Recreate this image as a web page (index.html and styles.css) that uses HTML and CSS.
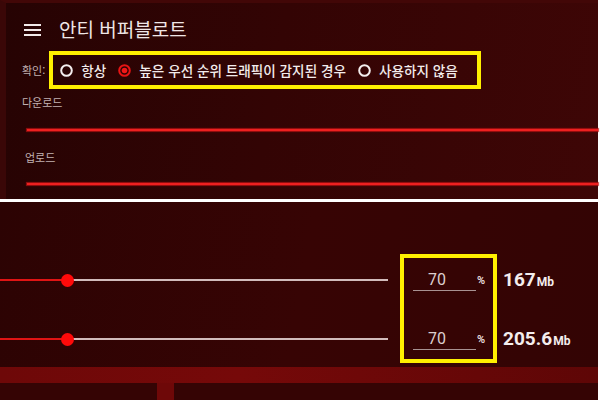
FILE: index.html
```html
<!DOCTYPE html>
<html lang="ko">
<head>
<meta charset="utf-8">
<link rel="stylesheet" href="styles.css">
</head>
<body>
<div class="page">
  <section class="panel top">
    <div class="title-row">
      <svg class="menu" width="17" height="12" viewBox="0 0 17 12">
        <rect x="0" y="0" width="17" height="2" fill="#f2eaea"/>
        <rect x="0" y="5" width="17" height="2" fill="#f2eaea"/>
        <rect x="0" y="10" width="17" height="2" fill="#f2eaea"/>
      </svg>
      <span class="title">안티 버퍼블로트</span>
    </div>
    <div class="check-row">
      <span class="label">확인:</span>
      <div class="hl radios">
        <span class="radio">
          <svg width="13" height="13" viewBox="0 0 13 13"><circle cx="6.5" cy="6.5" r="5.3" fill="none" stroke="#f4eeee" stroke-width="2"/></svg>
          <span>항상</span>
        </span>
        <span class="radio">
          <svg width="13" height="13" viewBox="0 0 13 13"><circle cx="6.5" cy="6.5" r="5.3" fill="none" stroke="#e61414" stroke-width="2"/><circle cx="6.5" cy="6.5" r="2.8" fill="#f01818"/></svg>
          <span>높은 우선 순위 트래픽이 감지된 경우</span>
        </span>
        <span class="radio">
          <svg width="13" height="13" viewBox="0 0 13 13"><circle cx="6.5" cy="6.5" r="5.3" fill="none" stroke="#f4eeee" stroke-width="2"/></svg>
          <span>사용하지 않음</span>
        </span>
      </div>
    </div>
    <div class="label sec-down">다운로드</div>
    <div class="redline first"></div>
    <div class="label sec-up">업로드</div>
    <div class="redline second"></div>
  </section>
  <section class="panel bottom">
    <div class="controls">
      <div class="sliders">
        <div class="row"><div class="track"><div class="fill"></div><div class="rest"></div><span class="thumb"></span></div></div>
        <div class="row"><div class="track"><div class="fill"></div><div class="rest"></div><span class="thumb"></span></div></div>
      </div>
      <div class="hl inputs">
        <div class="row"><span class="field">70</span><span class="pct">%</span></div>
        <div class="row"><span class="field">70</span><span class="pct">%</span></div>
      </div>
      <div class="values">
        <div class="row"><span class="num">167</span><span class="unit">Mb</span></div>
        <div class="row"><span class="num">205.6</span><span class="unit">Mb</span></div>
      </div>
    </div>
    <div class="band"></div>
    <div class="foot"><span class="stub"></span></div>
  </section>
</div>
</body>
</html>
```

FILE: styles.css
```css
html, body {
  margin: 0;
  padding: 0;
  background: #ffffff;
}
body {
  width: 600px;
  height: 400px;
  overflow: hidden;
  font-family: "Noto Sans CJK KR", "Noto Sans", Roboto, sans-serif;
}
.page {
  display: flex;
  flex-direction: column;
  gap: 3px;
  width: 598px;
}
.panel {
  box-sizing: border-box;
}
.top {
  height: 199px;
  border-top: 3px solid #420707;
  border-left: 6px solid #3a0707;
  padding-left: 16px;
  background: linear-gradient(100deg, #260303 0%, #330404 45%, #3e0606 100%);
  display: flex;
  flex-direction: column;
}
.title-row {
  height: 48px;
  box-sizing: border-box;
  padding-top: 4px;
  display: flex;
  align-items: center;
}
.menu {
  margin-left: 2px;
  margin-top: 2px;
}
.title {
  margin-left: 18px;
  font-size: 19px;
  color: #efe6e6;
  line-height: 24px;
}
.check-row {
  height: 38px;
  display: flex;
  align-items: center;
}
.label {
  font-size: 11px;
  line-height: 14px;
  color: #c2b2b2;
}
.hl {
  border: 4px solid #fff000;
  box-sizing: border-box;
}
.radios {
  margin-left: 4px;
  height: 38px;
  width: 432px;
  padding-left: 7px;
  display: flex;
  align-items: center;
  gap: 12px;
}
.radio {
  display: flex;
  align-items: center;
  gap: 8px;
  font-size: 13.6px;
  font-weight: 500;
  color: #f3ecec;
}
.radio svg {
  flex: none;
}
.sec-down {
  margin-top: 6px;
}
.redline {
  height: 2px;
  margin-left: 5px;
  background: #ee2020;
  box-shadow: 0 0 1px 1px rgba(190, 20, 20, 0.75);
}
.first {
  margin-top: 20px;
}
.sec-up {
  margin-top: 19px;
  margin-left: 3px;
}
.second {
  margin-top: 19px;
}
.bottom {
  height: 198px;
  background: linear-gradient(100deg, #2c0303 0%, #370404 50%, #330404 100%);
  display: flex;
  flex-direction: column;
  padding-top: 52px;
}
.controls {
  height: 109px;
  display: flex;
  align-items: flex-start;
}
.row {
  height: 40px;
  display: flex;
  align-items: center;
}
.sliders, .values {
  display: flex;
  flex-direction: column;
  gap: 19px;
  padding-top: 6px;
}
.sliders {
  width: 388px;
}
.track {
  position: relative;
  width: 100%;
  height: 2px;
  display: flex;
}
.fill {
  width: 67px;
  background: #e01414;
}
.rest {
  flex: 1;
  background: #d2bcbc;
}
.thumb {
  position: absolute;
  left: 61px;
  top: -5.5px;
  width: 13px;
  height: 13px;
  border-radius: 50%;
  background: #ff0a0a;
}
.inputs {
  margin-left: 12px;
  width: 97px;
  height: 109px;
  padding: 2px 0 0 9px;
  display: flex;
  flex-direction: column;
  gap: 19px;
}
.field {
  width: 63px;
  box-sizing: border-box;
  padding-left: 15px;
  font-family: Roboto, sans-serif;
  font-size: 16px;
  color: #ddcfcf;
  line-height: 20px;
  border-bottom: 1.5px solid #a89292;
  margin-top: 1px;
}
.pct {
  margin-left: 1px;
  font-family: Roboto, sans-serif;
  font-weight: 700;
  font-size: 11px;
  color: #e6dada;
}
.values {
  margin-left: 6px;
  font-family: Roboto, sans-serif;
  font-weight: 700;
  color: #f4eded;
}
.values .row {
  align-items: baseline;
  padding-top: 8px;
  box-sizing: border-box;
}
.num {
  font-size: 19px;
}
.unit {
  font-size: 12px;
  margin-left: 1px;
}
.band {
  margin-top: 4px;
  height: 16px;
  background: linear-gradient(90deg, #6e0808 0%, #760909 40%, #5e0606 100%);
}
.foot {
  flex: 1;
  background: #350404;
  display: flex;
  padding-left: 157px;
}
.stub {
  width: 17px;
  background: #6e0808;
}
```
